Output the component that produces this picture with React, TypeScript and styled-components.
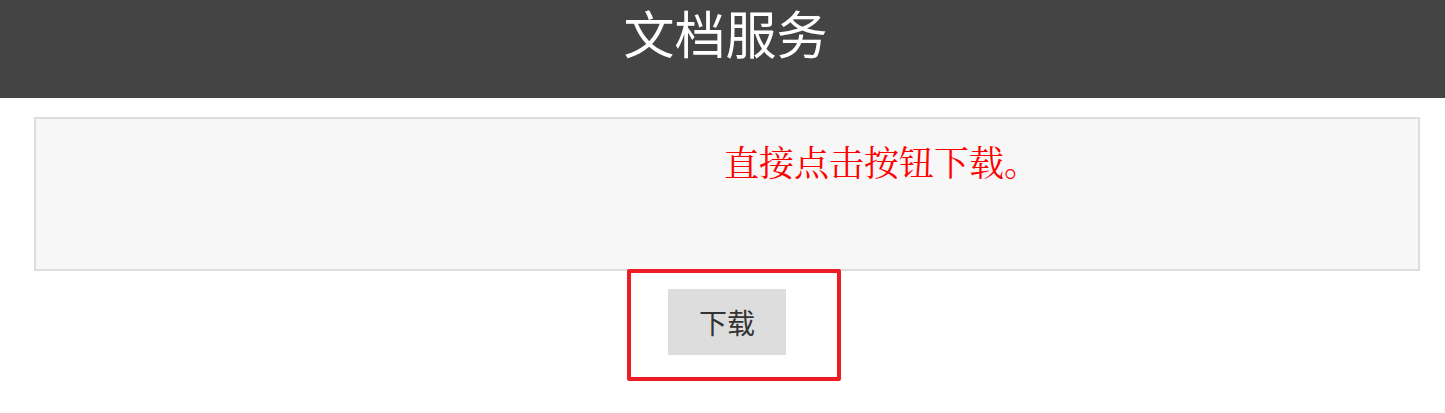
import React from "react";
import styled, { createGlobalStyle } from "styled-components";

const Global = createGlobalStyle`
  html, body { margin: 0; padding: 0; background: #fff; }
  body { font-family: "Noto Sans CJK SC", "Noto Sans", sans-serif; }
`;

const Header = styled.header`
  height: 98px;
  background: #444444;
  color: #fff;
  display: flex;
  justify-content: center;
  align-items: flex-start;
`;

const Title = styled.h1`
  margin: 0;
  font-family: "Noto Sans CJK SC", sans-serif;
  font-weight: 400;
  font-size: 51px;
  line-height: 64px;
  padding-left: 6px;
`;

const Notice = styled.section`
  margin: 19px 25px 0 34px;
  height: 154px;
  box-sizing: border-box;
  border: 2px solid #dddddd;
  background: #f7f7f7;
  padding: 20px 0 0 688px;
`;

const NoticeText = styled.p`
  margin: 0;
  color: #ff0000;
  font-family: "Noto Serif CJK SC", "Noto Serif CJK", serif;
  font-size: 35px;
  line-height: 44px;
`;

const Actions = styled.div`
  display: flex;
  justify-content: center;
  margin: -2px 25px 0 34px;
`;

const Highlight = styled.div`
  display: flex;
  padding: 16px 51px 22px 37px;
  border: 4px solid #ee1c25;
  border-radius: 2px;
  margin-left: 14px;
`;

const DownloadButton = styled.button`
  width: 118px;
  height: 66px;
  border: none;
  background: #dddddd;
  color: #333;
  font-family: "Noto Sans CJK SC", sans-serif;
  font-size: 28px;
  padding: 0;
  cursor: pointer;
`;

export default function App() {
  return (
    <>
      <Global />
      <Header>
        <Title>文档服务</Title>
      </Header>
      <Notice>
        <NoticeText>直接点击按钮下载。</NoticeText>
      </Notice>
      <Actions>
        <Highlight>
          <DownloadButton>下载</DownloadButton>
        </Highlight>
      </Actions>
    </>
  );
}
